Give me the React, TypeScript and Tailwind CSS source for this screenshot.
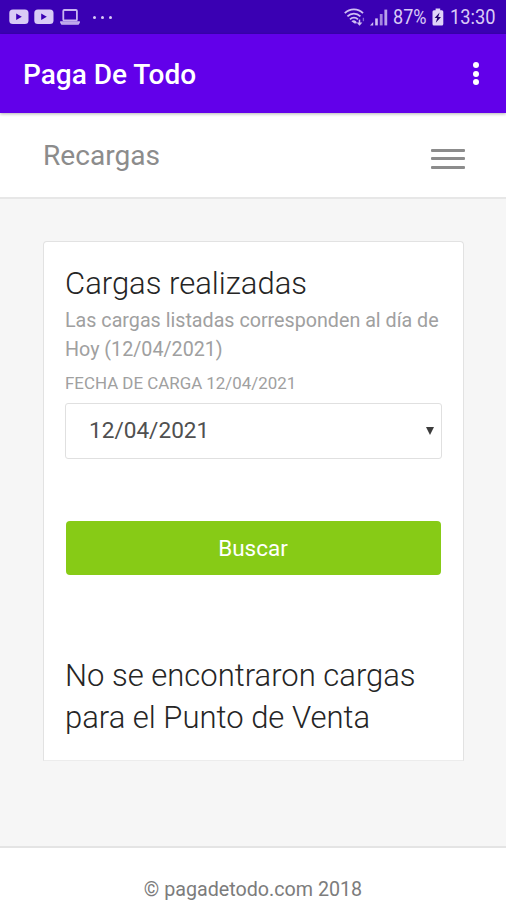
import { useState } from 'react';

const DATES = ['12/04/2021'];

function VideoIcon() {
  return (
    <svg width="20" height="16" viewBox="0 0 20 16" className="shrink-0">
      <rect x="0.3" y="0.5" width="19.2" height="14.6" rx="3.6" fill="#d9cbf6" />
      <path d="M7.2 4.6v6.4l5.6-3.2z" fill="#3a00b3" />
    </svg>
  );
}

function LaptopIcon() {
  return (
    <svg width="20" height="16" viewBox="0 0 20 16" className="shrink-0" fill="none" stroke="#c8b5f0">
      <rect x="3.3" y="1" width="13.6" height="10.4" rx="1" strokeWidth="1.8" />
      <path d="M0.8 13h18.4v0.6l-1 1.4H1.8l-1-1.4z" strokeWidth="1.3" fill="#a183dc" />
    </svg>
  );
}

function WifiIcon() {
  return (
    <svg width="22" height="18" viewBox="0 0 22 18" className="shrink-0" fill="none" stroke="#d0bff3">
      <path d="M0.8 5.2C5.8 0 14 0 19 5.2" strokeWidth="1.8" />
      <path d="M3.4 8.3c3.7-3.7 9.3-3.7 13 0" strokeWidth="1.8" />
      <path d="M6 11.3c2.3-2.3 5.6-2.3 7.9 0" strokeWidth="1.8" />
      <path d="M7.4 13.2c1.2-1.2 3.4-1.2 4.6 0l1 2-2.4 0.4z" fill="#d0bff3" stroke="none" />
      <path d="M12.6 14.6h5.8l-2.9 3.2z" fill="#d0bff3" stroke="none" />
      <path d="M15.5 11.6v4" strokeWidth="1.5" />
      <path d="M19.4 9.8v3.4" strokeWidth="1.3" opacity="0.5" />
    </svg>
  );
}

function SignalIcon() {
  return (
    <svg width="18" height="17" viewBox="0 0 18 17" className="shrink-0" fill="#d0bff3">
      <path d="M0 16.4l3.2-3.4v3.4z" />
      <rect x="5.2" y="9.4" width="2.6" height="7" />
      <rect x="9.8" y="5" width="2.8" height="11.4" opacity="0.7" />
      <rect x="14.4" y="0.6" width="2.8" height="15.8" opacity="0.85" />
    </svg>
  );
}

function BatteryIcon() {
  return (
    <svg width="12" height="18" viewBox="0 0 12 18" className="shrink-0">
      <path
        d="M3.6 0.4h4.6v1.8h1.6a1.5 1.5 0 0 1 1.5 1.5v12.2a1.5 1.5 0 0 1-1.5 1.5H2a1.5 1.5 0 0 1-1.5-1.5V3.7A1.5 1.5 0 0 1 2 2.2h1.6z"
        fill="#e0d4f8"
      />
      <path d="M7.6 4.6 2.6 10h2.6l-1.4 4.8L9 8.9H6.2z" fill="#23006e" />
    </svg>
  );
}

function StatusBar() {
  return (
    <div className="flex h-[34px] shrink-0 items-center bg-[#3a00b3] pl-[9px] pr-[10px] text-[#d9cbf6]">
      <div className="flex items-center">
        <VideoIcon />
        <span className="w-[5px]" />
        <VideoIcon />
        <span className="w-[6px]" />
        <LaptopIcon />
        <span className="ml-[13px] flex gap-[5px]">
          <i className="size-[3px] rounded-full bg-[#d9cbf6]" />
          <i className="size-[3px] rounded-full bg-[#d9cbf6]" />
          <i className="size-[3px] rounded-full bg-[#d9cbf6]" />
        </span>
      </div>
      <div className="ml-auto flex items-center">
        <WifiIcon />
        <span className="ml-[4px]">
          <SignalIcon />
        </span>
        <span className="ml-[5px] w-[33px] origin-left scale-x-[0.86] whitespace-nowrap text-[21px] leading-none">
          87%
        </span>
        <span className="mx-[6px]">
          <BatteryIcon />
        </span>
        <span className="w-[46px] origin-left scale-x-[0.87] whitespace-nowrap text-[21px] leading-none">
          13:30
        </span>
      </div>
    </div>
  );
}

export default function App() {
  const [date, setDate] = useState(DATES[0]);

  return (
    <div className="flex h-[900px] w-[506px] flex-col overflow-hidden bg-[#f6f6f6] font-['Roboto',sans-serif]">
      <StatusBar />

      <header className="z-10 flex h-[79px] shrink-0 items-center justify-between bg-[#6200ea] pl-[23px] pr-[27px] shadow-[0_1px_3px_rgba(0,0,0,0.3)]">
        <h1 className="mt-[3px] text-[28px] font-medium leading-none text-white">Paga De Todo</h1>
        <button className="flex flex-col gap-[2.5px]" aria-label="Más opciones">
          <i className="size-[6px] rounded-full bg-white" />
          <i className="size-[6px] rounded-full bg-white" />
          <i className="size-[6px] rounded-full bg-white" />
        </button>
      </header>

      <nav className="flex h-[86px] shrink-0 items-center justify-between border-b-2 border-[#e7e7e7] bg-white pl-[43px] pr-[41px]">
        <span className="mt-[2px] text-[28.1px] leading-none text-[#8c8c8c]">Recargas</span>
        <button className="mt-[7px] flex flex-col gap-[5.5px]" aria-label="Menú">
          <i className="h-[3px] w-[34px] rounded-[1px] bg-[#8c8c8c]" />
          <i className="h-[3px] w-[34px] rounded-[1px] bg-[#8c8c8c]" />
          <i className="h-[3px] w-[34px] rounded-[1px] bg-[#8c8c8c]" />
        </button>
      </nav>

      <main className="flex-1 pl-[43px] pr-[42px] pt-[42px]">
        <section className="h-[520px] rounded-t-[4px] border border-[#e2e2e2] border-b-[#ececec] bg-white px-[21px] pt-[21px]">
          <h2 className="mb-px whitespace-nowrap text-[31px] font-light leading-[42px] text-[#252525]">
            Cargas realizadas
          </h2>
          <p className="whitespace-nowrap text-[19.7px] leading-[29px] text-[#a0a0a0]">
            Las cargas listadas corresponden al día de
            <br />
            Hoy (12/04/2021)
          </p>
          <label
            htmlFor="fecha"
            className="mt-[6px] block whitespace-nowrap text-[16.9px] leading-[26px] text-[#a0a0a0]"
          >
            FECHA DE CARGA {date}
          </label>
          <div className="mt-[7px] flex h-[56px] items-center rounded-[3px] border border-[#e0e0e0] pr-[7px]">
            <select
              id="fecha"
              value={date}
              onChange={(e) => setDate(e.target.value)}
              className="h-full flex-1 appearance-none pl-[23px] text-[22.6px] text-[#505050]"
            >
              {DATES.map((d) => (
                <option key={d} value={d}>
                  {d}
                </option>
              ))}
            </select>
            <svg width="8" height="8" viewBox="0 0 8 8">
              <path d="M0 0h8L4 8z" fill="#3c3c3c" />
            </svg>
          </div>
          <button className="ml-[0.5px] mt-[62px] h-[54px] w-[375px] rounded-[4px] bg-[#87cb16] text-[22.5px] leading-none text-white">
            Buscar
          </button>
          <h2 className="mt-[80px] whitespace-nowrap text-[31px] font-light leading-[42px] text-[#252525]">
            No se encontraron cargas
            <br />
            para el Punto de Venta
          </h2>
        </section>
      </main>

      <footer className="h-[54px] shrink-0 border-t-2 border-[#e4e4e4] bg-white pt-[27px] text-center">
        <span className="block text-[19.7px] leading-[29px] text-[#7c7c7c]">© pagadetodo.com 2018</span>
      </footer>
    </div>
  );
}
